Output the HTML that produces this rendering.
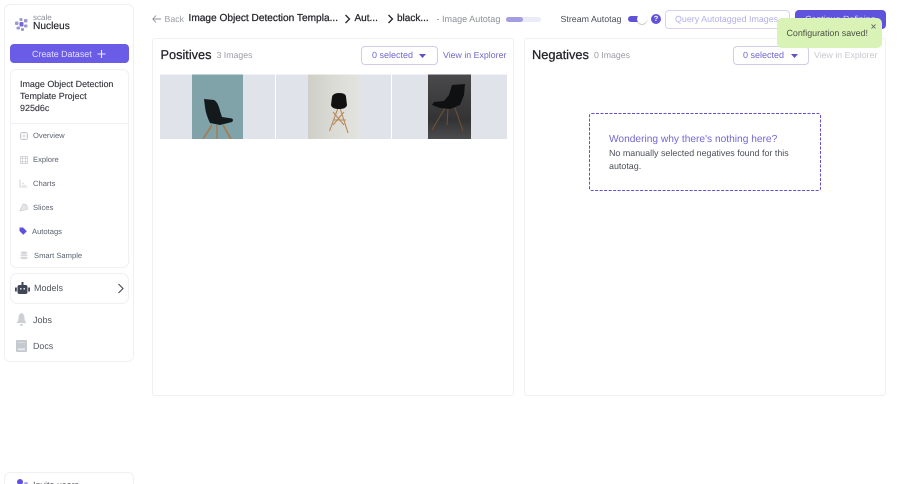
<!DOCTYPE html>
<html lang="en">
<head>
<meta charset="utf-8">
<title>Nucleus</title>
<style>
html,body{margin:0;padding:0;background:#fff;width:900px;height:484px;overflow:hidden}
#p{position:relative;width:900px;height:484px;overflow:hidden;font-family:"Liberation Sans",sans-serif;color:#2b2b33;text-rendering:geometricPrecision}
.a{position:absolute;box-sizing:border-box}
.t{position:absolute;white-space:nowrap;line-height:1}
.card{border:1px solid #f0f0f4;border-radius:6px;background:#fff}
.nav{font-size:7.6px;color:#5c6270}
.ic{position:absolute}
.h{-webkit-text-stroke:.25px currentColor}
</style>
</head>
<body>
<div id="p">
<!-- Sidebar -->
<div class="a card" style="left:4px;top:4px;width:130px;height:358px"></div>
<svg class="ic" style="left:14px;top:17px" width="15" height="15" viewBox="0 0 15 15">
<g fill="#9d97cc"><rect x="1" y="4.500" width="3.500" height="3.500" rx="1"/><rect x="5.500" y="1" width="3" height="3" rx="1"/><rect x="10" y="2" width="3.500" height="3.500" rx="1"/><rect x="10" y="7.500" width="3.500" height="3" rx="1"/><rect x="2.500" y="9.500" width="3.500" height="3" rx="1"/><rect x="7" y="11" width="3" height="3" rx="1"/></g>
<rect x="5.500" y="5" width="4" height="4.500" rx="1" fill="#7468d8"/>
</svg>
<div class="t" style="left:33px;top:14px;font-size:8px;color:#8a8d96">scale</div>
<div class="t h" style="left:33px;top:22px;font-size:10.200px;color:#22222a;-webkit-text-stroke-width:.15px">Nucleus</div>
<div class="a" style="left:10px;top:44px;width:119px;height:19px;background:#6a5ce6;border-radius:4px"></div>
<div class="t" style="left:32px;top:49.500px;font-size:8.900px;color:#e4e1fb">Create Dataset</div>
<svg class="ic" style="left:97px;top:50px" width="9" height="8" viewBox="0 0 9 8"><path d="M4.500 0v8M.5 4h8" stroke="#eceafd" stroke-width="1.100"/></svg>

<div class="a card" style="left:10px;top:69px;width:119px;height:199px"></div>
<div class="a" style="left:10px;top:123px;width:119px;height:1px;background:#f0f0f4"></div>
<div class="t h" style="left:20px;top:78px;font-size:8.950px;color:#33343c;line-height:12px;-webkit-text-stroke-width:.12px">Image Object Detection<br>Template Project<br>925d6c</div>

<svg class="ic" style="left:20px;top:132px" width="8" height="8" viewBox="0 0 8 8"><rect x=".5" y=".5" width="7" height="7" rx="2" fill="none" stroke="#c0c3ca"/><path d="M4 .5v7M.5 4h7" stroke="#d0d2d8" stroke-width=".7"/></svg>
<div class="t nav" style="left:33px;top:132px">Overview</div>
<svg class="ic" style="left:20px;top:156px" width="8" height="8" viewBox="0 0 8 8"><rect x=".3" y=".3" width="7.400" height="7.400" fill="none" stroke="#c0c3ca" stroke-width=".6"/><path d="M2.700 0v8M5.300 0v8M0 2.700h8M0 5.300h8" stroke="#c0c3ca" stroke-width=".6"/></svg>
<div class="t nav" style="left:33px;top:155.500px">Explore</div>
<svg class="ic" style="left:19px;top:179px" width="9" height="9" viewBox="0 0 9 9"><path d="M1 .5V8h7.500" fill="none" stroke="#c8cad0" stroke-width=".8"/><path d="M3 6.300h4M3 4.300h2" stroke="#d8dade" stroke-width=".8"/></svg>
<div class="t nav" style="left:33px;top:179.500px">Charts</div>
<svg class="ic" style="left:19px;top:203px" width="9" height="9" viewBox="0 0 9 9"><path d="M.8 8 4 1a4 4 0 0 1 4.200 5.500z" fill="#e4e5e8" stroke="#c4c7cc" stroke-width=".6"/></svg>
<div class="t nav" style="left:33px;top:203.500px">Slices</div>
<svg class="ic" style="left:19px;top:227px" width="8" height="8" viewBox="0 0 8 8"><path d="M.5.5h3.500L7.800 4.300 4.300 7.800.5 4z" fill="#5f50dd"/></svg>
<div class="t nav" style="left:32px;top:227.500px">Autotags</div>
<svg class="ic" style="left:20px;top:251px" width="8" height="9" viewBox="0 0 8 9"><ellipse cx="4" cy="1.800" rx="3.500" ry="1.500" fill="#d6d8dc"/><path d="M.5 3.500v1.200c0 .8 7 .8 7 0V3.500zM.5 6v1.300c0 1.300 7 1.300 7 0V6z" fill="#d6d8dc"/></svg>
<div class="t nav" style="left:34px;top:251.500px">Smart Sample</div>

<div class="a card" style="left:10px;top:273px;width:119px;height:31px;border-radius:7px"></div>
<svg class="ic" style="left:15px;top:282px" width="15" height="13" viewBox="0 0 15 13"><rect x="2.500" y="3" width="10" height="9" rx="2" fill="#3f4656"/><rect x="0" y="5.500" width="1.800" height="4" fill="#3f4656"/><rect x="13.200" y="5.500" width="1.800" height="4" fill="#3f4656"/><rect x="6.500" y="0" width="2" height="3" fill="#3f4656"/><rect x="5" y="6" width="1.500" height="1.500" fill="#dfe2e6"/><rect x="8.500" y="6" width="1.500" height="1.500" fill="#dfe2e6"/></svg>
<div class="t" style="left:34px;top:283.800px;font-size:9px;color:#50555f">Models</div>
<svg class="ic" style="left:117px;top:283px" width="7" height="11" viewBox="0 0 7 11"><path d="M1.500 1 6 5.500 1.500 10" fill="none" stroke="#444a55" stroke-width="1.100"/></svg>

<svg class="ic" style="left:16px;top:313px" width="11" height="13" viewBox="0 0 11 13"><path d="M5.500 0C3 1 2.500 3 2.500 5.500 2.500 8 1 9 .5 10h10C10 9 8.500 8 8.500 5.500 8.500 3 8 1 5.500 0z" fill="#ccd0d5"/><rect x="4" y="11" width="3" height="1.700" rx=".8" fill="#ccd0d5"/></svg>
<div class="t" style="left:33px;top:315.500px;font-size:9px;color:#50555f">Jobs</div>
<svg class="ic" style="left:16px;top:340px" width="11" height="12" viewBox="0 0 11 12"><rect width="11" height="12" rx="1" fill="#c5c9d0"/><rect x="2" y="8.500" width="7" height="1.700" fill="#eceef0"/><rect x="2" y="2" width="7" height="1" fill="#d8dbdf"/></svg>
<div class="t" style="left:33px;top:341.500px;font-size:8.900px;color:#50555f">Docs</div>

<div class="a card" style="left:4px;top:472px;width:130px;height:30px"></div>
<svg class="ic" style="left:15px;top:479px" width="14" height="5" viewBox="0 0 14 5"><circle cx="5" cy="3" r="3" fill="#5f50dd"/><circle cx="11" cy="5" r="2" fill="#a9a2ec"/></svg>
<div class="t" style="left:33px;top:481px;font-size:9px;color:#50555f">Invite users</div>

<!-- Header -->
<svg class="ic" style="left:152px;top:15px" width="9" height="8" viewBox="0 0 9 8"><path d="M4 .5.800 4 4 7.500M1 4h8" fill="none" stroke="#8b8f98" stroke-width=".9"/></svg>
<div class="t" style="left:164.500px;top:14.800px;font-size:8.800px;color:#9a9da5">Back</div>
<div class="t h" style="left:188.500px;top:13.500px;font-size:10.150px;color:#25252c">Image Object Detection Templa...</div>
<svg class="ic" style="left:344px;top:14px" width="7" height="10" viewBox="0 0 7 10"><path d="M1.500 1 5.500 5 1.500 9" fill="none" stroke="#25252c" stroke-width="1.300"/></svg>
<div class="t h" style="left:354.500px;top:13.500px;font-size:10px;color:#25252c">Aut...</div>
<svg class="ic" style="left:387px;top:14px" width="7" height="10" viewBox="0 0 7 10"><path d="M1.500 1 5.500 5 1.500 9" fill="none" stroke="#25252c" stroke-width="1.300"/></svg>
<div class="t h" style="left:397px;top:13.500px;font-size:10px;color:#25252c">black...</div>
<div class="t" style="left:436.500px;top:14.700px;font-size:9.050px;color:#8c8f98">- Image Autotag</div>
<div class="a" style="left:506px;top:16.500px;width:35px;height:5px;background:#ecebfa;border-radius:3px"></div>
<div class="a" style="left:506px;top:16.500px;width:17px;height:5px;background:#a39ee2;border-radius:3px"></div>

<div class="t" style="left:560.500px;top:14.800px;font-size:8.850px;color:#4b4f59">Stream Autotag</div>
<div class="a" style="left:628px;top:16px;width:12px;height:6px;background:#5f52d8;border-radius:3px"></div>
<div class="a" style="left:637px;top:14px;width:10px;height:10px;background:#fff;border-radius:50%;box-shadow:0 1px 1px rgba(0,0,0,.25)"></div>
<div class="a" style="left:651px;top:14px;width:10px;height:10px;background:#5f52d8;border-radius:50%;color:#fff;font-size:7.500px;font-weight:bold;line-height:10px;text-align:center">?</div>

<div class="a" style="left:665px;top:10px;width:125px;height:19px;border:1px solid #d6d3f0;border-radius:4px;background:#fff"></div>
<div class="t" style="left:675px;top:14.800px;font-size:8.900px;color:#b3aeea">Query Autotagged Images</div>
<div class="a" style="left:795px;top:10px;width:91px;height:19px;background:#5f52dc;border-radius:4px"></div>
<div class="t" style="left:805px;top:14.800px;font-size:8.900px;color:#dcd9f8">Continue Refining</div>

<!-- Panels -->
<div class="a card" style="left:152px;top:38px;width:362px;height:358px;border-radius:3px"></div>
<div class="a card" style="left:524px;top:38px;width:362px;height:358px;border-radius:3px"></div>

<div class="t h" style="left:160.500px;top:49px;font-size:12.750px;color:#22222a">Positives</div>
<div class="t" style="left:216.500px;top:51px;font-size:8.750px;color:#9a9da5">3 Images</div>
<div class="a" style="left:361px;top:46px;width:77px;height:19px;border:1px solid #cfcdea;border-radius:4px"></div>
<div class="t" style="left:372px;top:51px;font-size:9px;color:#6f67d0">0 selected</div>
<svg class="ic" style="left:418px;top:53px" width="9" height="6" viewBox="0 0 9 6"><path d="M1 1h7L4.500 5z" fill="#5f52c8"/></svg>
<div class="t" style="left:443px;top:51px;font-size:8.800px;color:#6f67c8">View in Explorer</div>

<div class="t h" style="left:532px;top:49px;font-size:12.800px;color:#22222a">Negatives</div>
<div class="t" style="left:594px;top:51px;font-size:8.750px;color:#9a9da5">0 Images</div>
<div class="a" style="left:733px;top:46px;width:76px;height:19px;border:1px solid #cfcdea;border-radius:4px"></div>
<div class="t" style="left:743px;top:51px;font-size:9px;color:#6f67d0">0 selected</div>
<svg class="ic" style="left:790px;top:53px" width="9" height="6" viewBox="0 0 9 6"><path d="M1 1h7L4.500 5z" fill="#5f52c8"/></svg>
<div class="t" style="left:814px;top:51px;font-size:8.800px;color:#c8c9cf">View in Explorer</div>

<!-- Images -->
<svg class="ic" style="left:160px;top:74px" width="347" height="65" viewBox="0 -1 347 65">
<defs>
<linearGradient id="g2" x1="0" x2="1" y1="0" y2="0"><stop offset="0" stop-color="#cfcfc8"/><stop offset=".5" stop-color="#dbdbd6"/><stop offset="1" stop-color="#e2e2df"/></linearGradient>
<linearGradient id="g3" x1="0" x2="0" y1="0" y2="1"><stop offset="0" stop-color="#4a4a4d"/><stop offset=".7" stop-color="#333335"/><stop offset="1" stop-color="#4c4c4e"/></linearGradient>
</defs>
<rect x="0" y="-.5" width="115" height="64.500" fill="#e0e4ea"/>
<rect x="116" y="-.5" width="115" height="64.500" fill="#e0e4ea"/>
<rect x="232" y="-.5" width="115" height="64.500" fill="#e0e4ea"/>

<rect x="32" y="-.5" width="51" height="64.500" fill="#7fa3a9"/>
<path d="M52 50 43 64" stroke="#a67c52" stroke-width="1.800"/>
<path d="M57 50V64" stroke="#a67c52" stroke-width="1.500"/>
<path d="M63 50 71 64" stroke="#a67c52" stroke-width="1.800"/>
<path d="M44 24 54 25Q58 27 60 36L62 42 72 43.500Q74 45 72 47L60 50 50 48Q46 40 45 32z" fill="#14191c"/>

<rect x="148" y="-.5" width="51" height="64.500" fill="url(#g2)"/>
<path d="M178 33 169.500 56M180 33 188 58M173 45H186M173 37 184 50M184 37 173 50" stroke="#b88a58" stroke-width="1.100" fill="none"/>
<path d="M172 22Q173 18 179 18 186 18 186 22L187 30Q186 34 179 34 172 34 171 30z" fill="#111"/>

<rect x="268" y="-.5" width="43" height="64.500" fill="url(#g3)"/>
<path d="M285 33 272 55M295 33 303 56M288 33 287 50" stroke="#6e5030" stroke-width="1.100" fill="none"/>
<path d="M292 10 305 9 304 20 300 30 290 34 280 33 272 30 274 27 284 26 289 20z" fill="#0f1012"/>
</svg>

<!-- Empty state -->
<svg class="ic" style="left:588px;top:112px" width="234" height="80" viewBox="0 0 234 80"><rect x="1.500" y="1.500" width="231" height="77" rx="2" fill="none" stroke="#5f52c8" stroke-width="1" stroke-dasharray="3 1.500"/></svg>
<div class="t" style="left:609px;top:135px;font-size:10.200px;color:#7467cf">Wondering why there's nothing here?</div>
<div class="t" style="left:609px;top:147px;font-size:8.920px;color:#4b4f59;line-height:13px">No manually selected negatives found for this<br>autotag.</div>

<!-- Toast -->
<div class="a" style="left:777px;top:18px;width:105px;height:30px;background:#d9f2b6;border-radius:5px"></div>
<div class="t" style="left:786.500px;top:28.500px;font-size:8.900px;color:#4a5244">Configuration saved!</div>
<svg class="ic" style="left:871px;top:24px" width="5" height="5" viewBox="0 0 5 5"><path d="M.5.500l4 4M4.500.500l-4 4" stroke="#555" stroke-width=".8"/></svg>
</div>
</body>
</html>
